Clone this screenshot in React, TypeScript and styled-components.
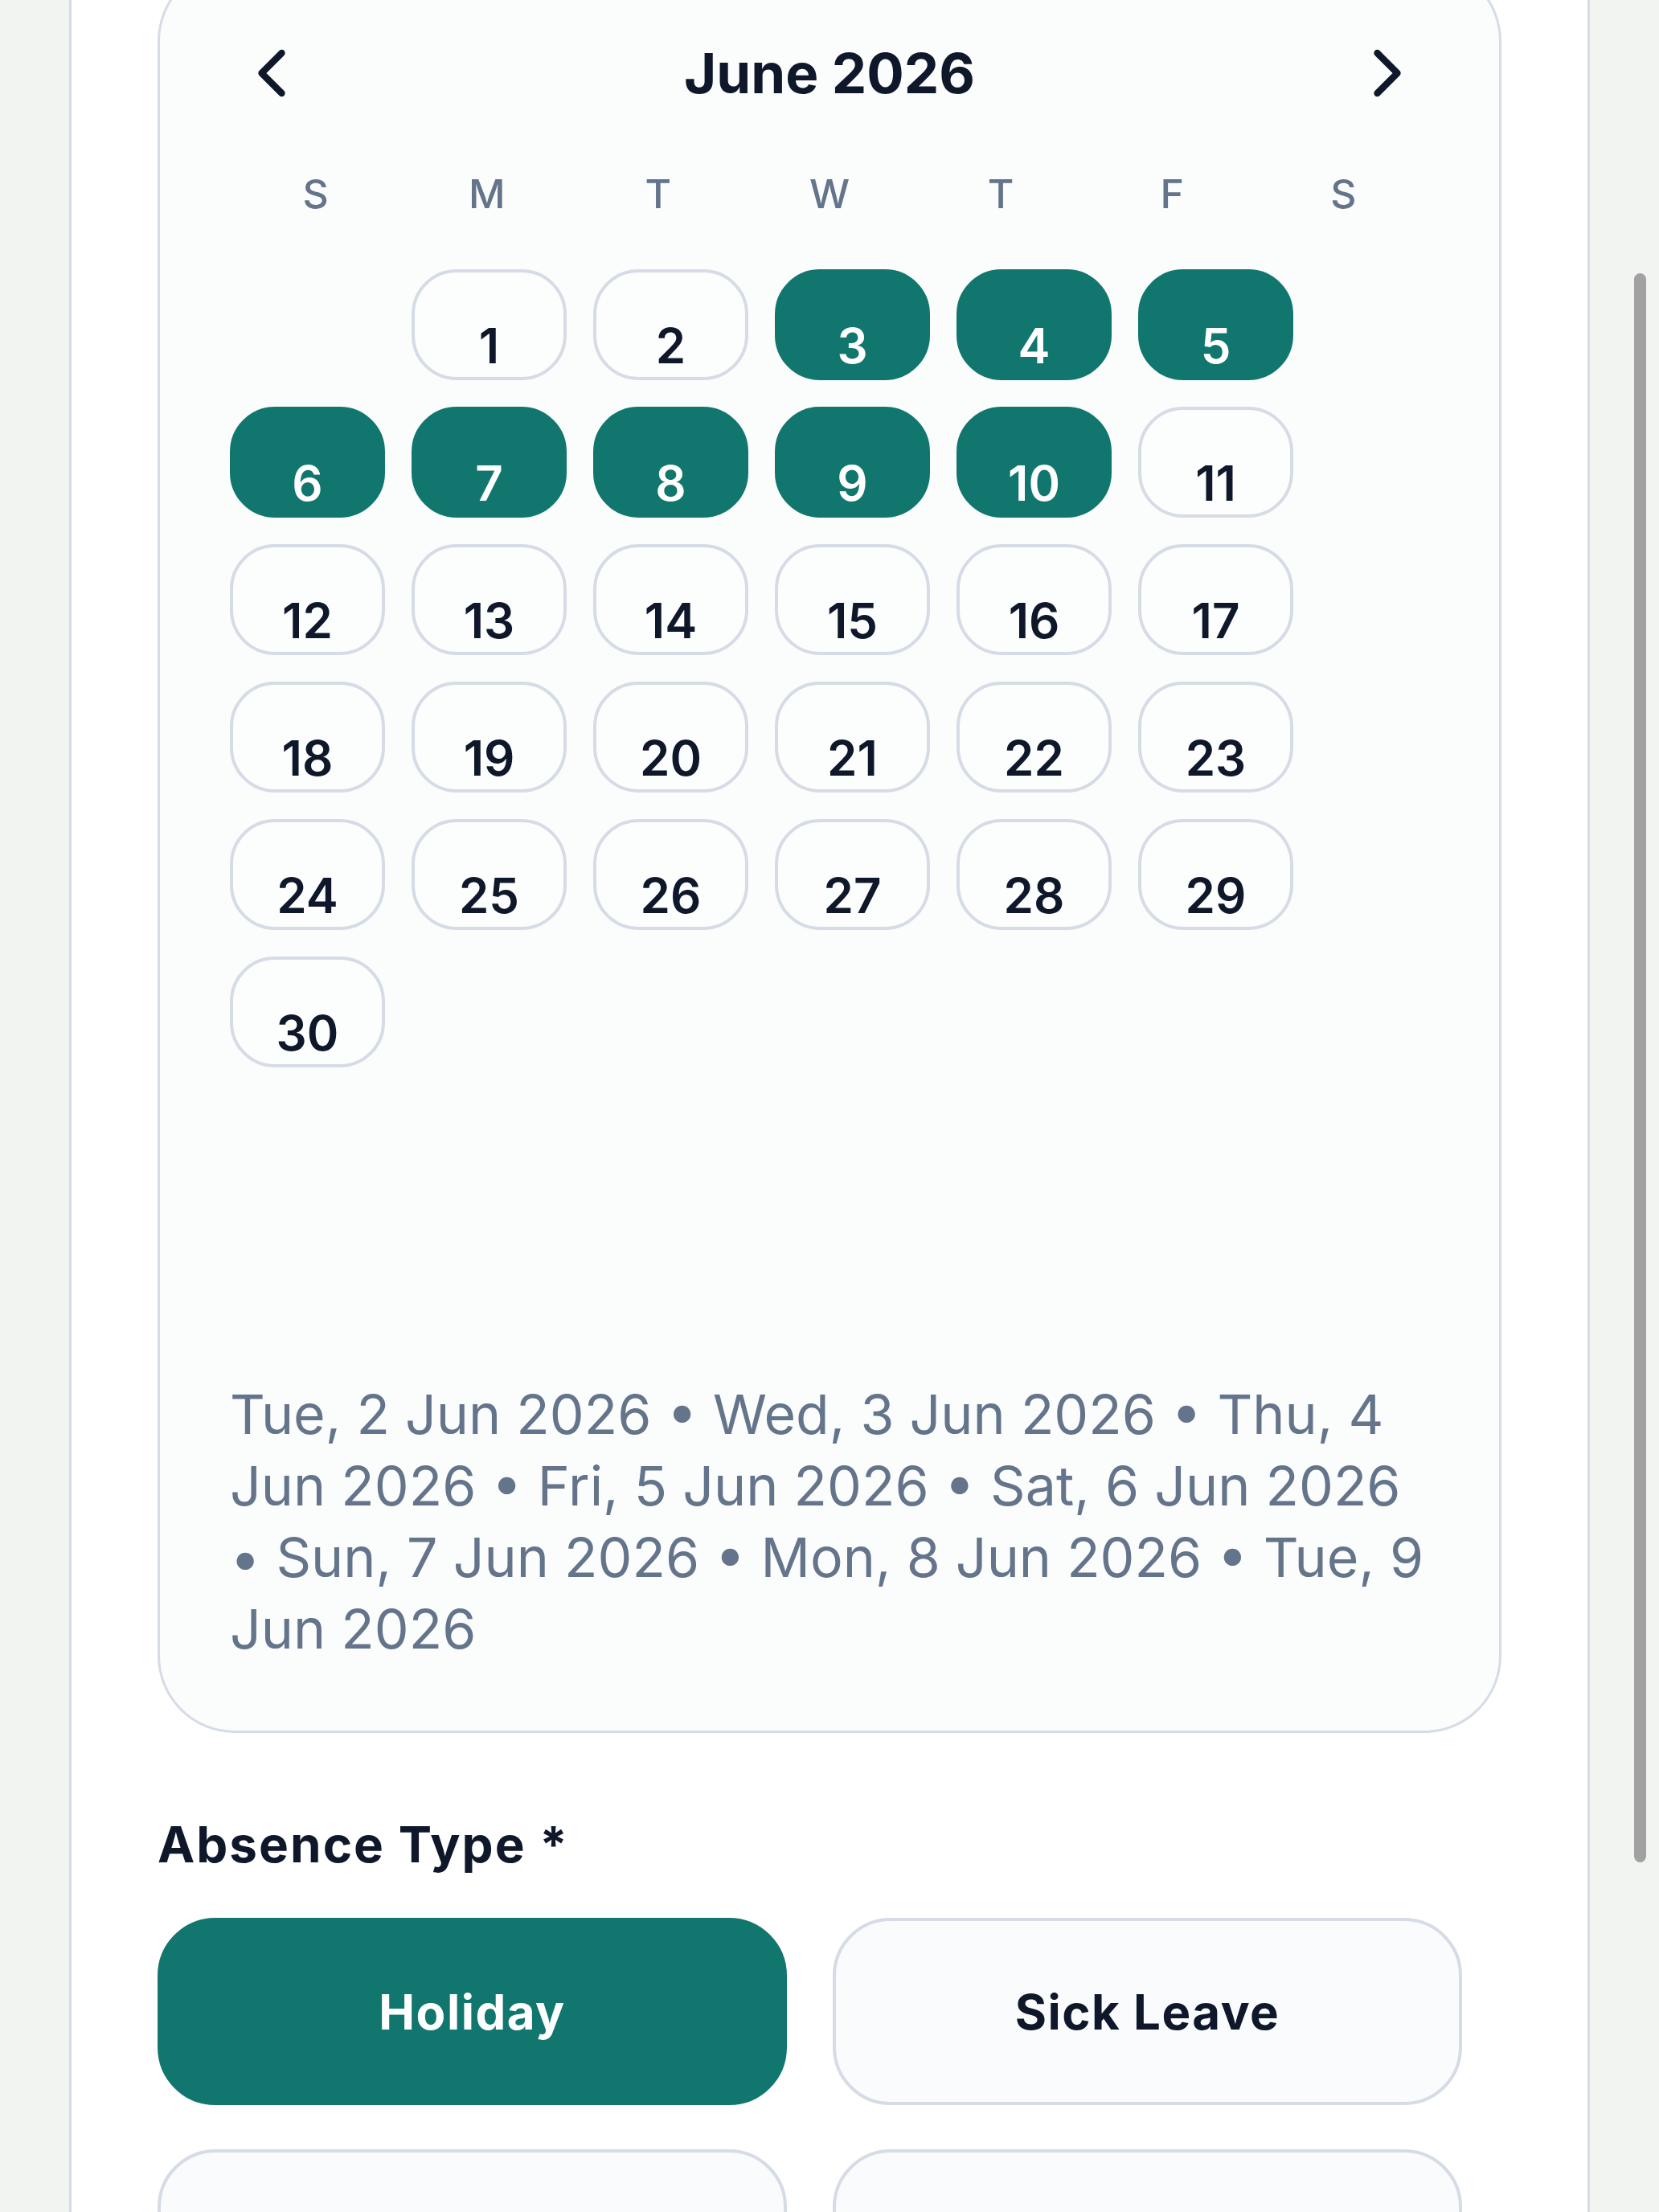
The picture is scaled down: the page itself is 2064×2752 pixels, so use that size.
import * as React from "react";
import styled, { createGlobalStyle } from "styled-components";
import { ChevronLeft, ChevronRight } from "lucide-react";

const GlobalStyle = createGlobalStyle`
	html, body {
		margin: 0;
		padding: 0;
		background: #f2f4f1;
		font-family: Inter, "Noto Sans", sans-serif;
	}
	* {
		box-sizing: border-box;
	}
`;

const teal = "#11776e";
const ink = "#0f172a";
const slate = "#64748b";
const line = "#d5dce6";

const WEEKDAYS = ["S", "M", "T", "W", "T", "F", "S"];
const SELECTED = [3, 4, 5, 6, 7, 8, 9, 10];
const SUMMARY = [
	"Tue, 2 Jun 2026",
	"Wed, 3 Jun 2026",
	"Thu, 4 Jun 2026",
	"Fri, 5 Jun 2026",
	"Sat, 6 Jun 2026",
	"Sun, 7 Jun 2026",
	"Mon, 8 Jun 2026",
	"Tue, 9 Jun 2026",
];
// the last two options sit below the fold in this view
const ABSENCE_TYPES = [
	{ id: "holiday", label: "Holiday", visible: true },
	{ id: "sick", label: "Sick Leave", visible: true },
	{ id: "personal", label: "Personal", visible: false },
	{ id: "other", label: "Other", visible: false },
];

const App = () => {
	const [absenceType, setAbsenceType] = React.useState("holiday");
	const days = Array.from({ length: 30 }, (_, i) => i + 1);

	return (
		<>
			<GlobalStyle />
			<Screen>
				<Panel>
					<CalendarCard>
						<Header>
							<NavButton aria-label="Previous month">
								<ChevronLeft size={100} strokeWidth={2} />
							</NavButton>
							<MonthTitle>June 2026</MonthTitle>
							<NavButton aria-label="Next month">
								<ChevronRight size={100} strokeWidth={2} />
							</NavButton>
						</Header>

						<WeekdayRow>
							{WEEKDAYS.map((d, i) => (
								<Weekday key={i}>{d}</Weekday>
							))}
						</WeekdayRow>

						<DayGrid>
							<BlankDay />
							{days.map((day) => (
								<DayCell key={day} selected={SELECTED.includes(day)}>
									{day}
								</DayCell>
							))}
						</DayGrid>

						<Summary>{SUMMARY.join(" • ")}</Summary>
					</CalendarCard>

					<FieldLabel>Absence Type *</FieldLabel>
					<TypeGrid>
						{ABSENCE_TYPES.map(({ id, label, visible }) => (
							<TypeButton
								key={id}
								aria-label={label}
								active={absenceType === id}
								onClick={() => setAbsenceType(id)}
							>
								{visible && label}
							</TypeButton>
						))}
					</TypeGrid>
				</Panel>
				<ScrollIndicator />
			</Screen>
		</>
	);
};

const Screen = styled.div`
	position: relative;
	height: 2752px;
	overflow: hidden;
	display: flex;
`;

const Panel = styled.main`
	margin-left: 86px;
	margin-top: -45px;
	width: 1892px;
	padding: 0 107px 200px;
	background: #ffffff;
	border-left: 3px solid ${line};
	border-right: 3px solid ${line};
`;

const CalendarCard = styled.section`
	border: 3px solid ${line};
	border-radius: 96px;
	background: #fbfcfc;
	padding: 85px 87px 82px;
`;

const Header = styled.div`
	display: flex;
	align-items: center;
	justify-content: space-between;
	height: 96px;
`;

const NavButton = styled.button`
	display: flex;
	align-items: center;
	justify-content: center;
	width: 104px;
	height: 96px;
	padding: 0;
	border: none;
	background: transparent;
	color: ${ink};
	cursor: pointer;
`;

const MonthTitle = styled.h2`
	margin: 0;
	font-size: 69px;
	font-weight: 700;
	color: ${ink};
`;

const WeekdayRow = styled.div`
	display: grid;
	grid-template-columns: repeat(7, 1fr);
	margin-top: 72px;
`;

const Weekday = styled.span`
	text-align: center;
	font-size: 50px;
	line-height: 60px;
	font-weight: 500;
	color: ${slate};
`;

const DayGrid = styled.div`
	display: flex;
	flex-wrap: wrap;
	gap: 33px;
	margin-top: 64px;
`;

const BlankDay = styled.div`
	width: 193px;
	height: 138px;
`;

const DayCell = styled.button<{ selected: boolean }>`
	display: flex;
	align-items: center;
	justify-content: center;
	width: 193px;
	height: 138px;
	padding: 52px 0 0;
	border-radius: 56px;
	border: 4px solid ${({ selected }) => (selected ? teal : line)};
	background: ${({ selected }) => (selected ? teal : "#fcfdfd")};
	color: ${({ selected }) => (selected ? "#ffffff" : ink)};
	font-family: inherit;
	font-size: 60px;
	line-height: 60px;
	font-weight: 600;
	cursor: pointer;
`;

const Summary = styled.p`
	margin: 387px 0 0;
	font-size: 68px;
	line-height: 89px;
	color: ${slate};
`;

const FieldLabel = styled.h3`
	margin: 103px 0 0;
	font-size: 62px;
	line-height: 72px;
	font-weight: 700;
	letter-spacing: 2px;
	color: ${ink};
`;

const TypeGrid = styled.div`
	display: grid;
	grid-template-columns: repeat(2, 783px);
	gap: 55px 57px;
	margin-top: 55px;
`;

const TypeButton = styled.button<{ active: boolean }>`
	height: 233px;
	border-radius: 72px;
	border: 4px solid ${({ active }) => (active ? teal : line)};
	background: ${({ active }) => (active ? teal : "#fafbfc")};
	color: ${({ active }) => (active ? "#ffffff" : ink)};
	font-family: inherit;
	font-size: 60px;
	font-weight: 700;
	letter-spacing: 1.5px;
	cursor: pointer;
`;

const ScrollIndicator = styled.div`
	position: absolute;
	left: 2033px;
	top: 340px;
	width: 15px;
	height: 1977px;
	border-radius: 8px;
	background: #a1a1a1;
`;

export default App;
